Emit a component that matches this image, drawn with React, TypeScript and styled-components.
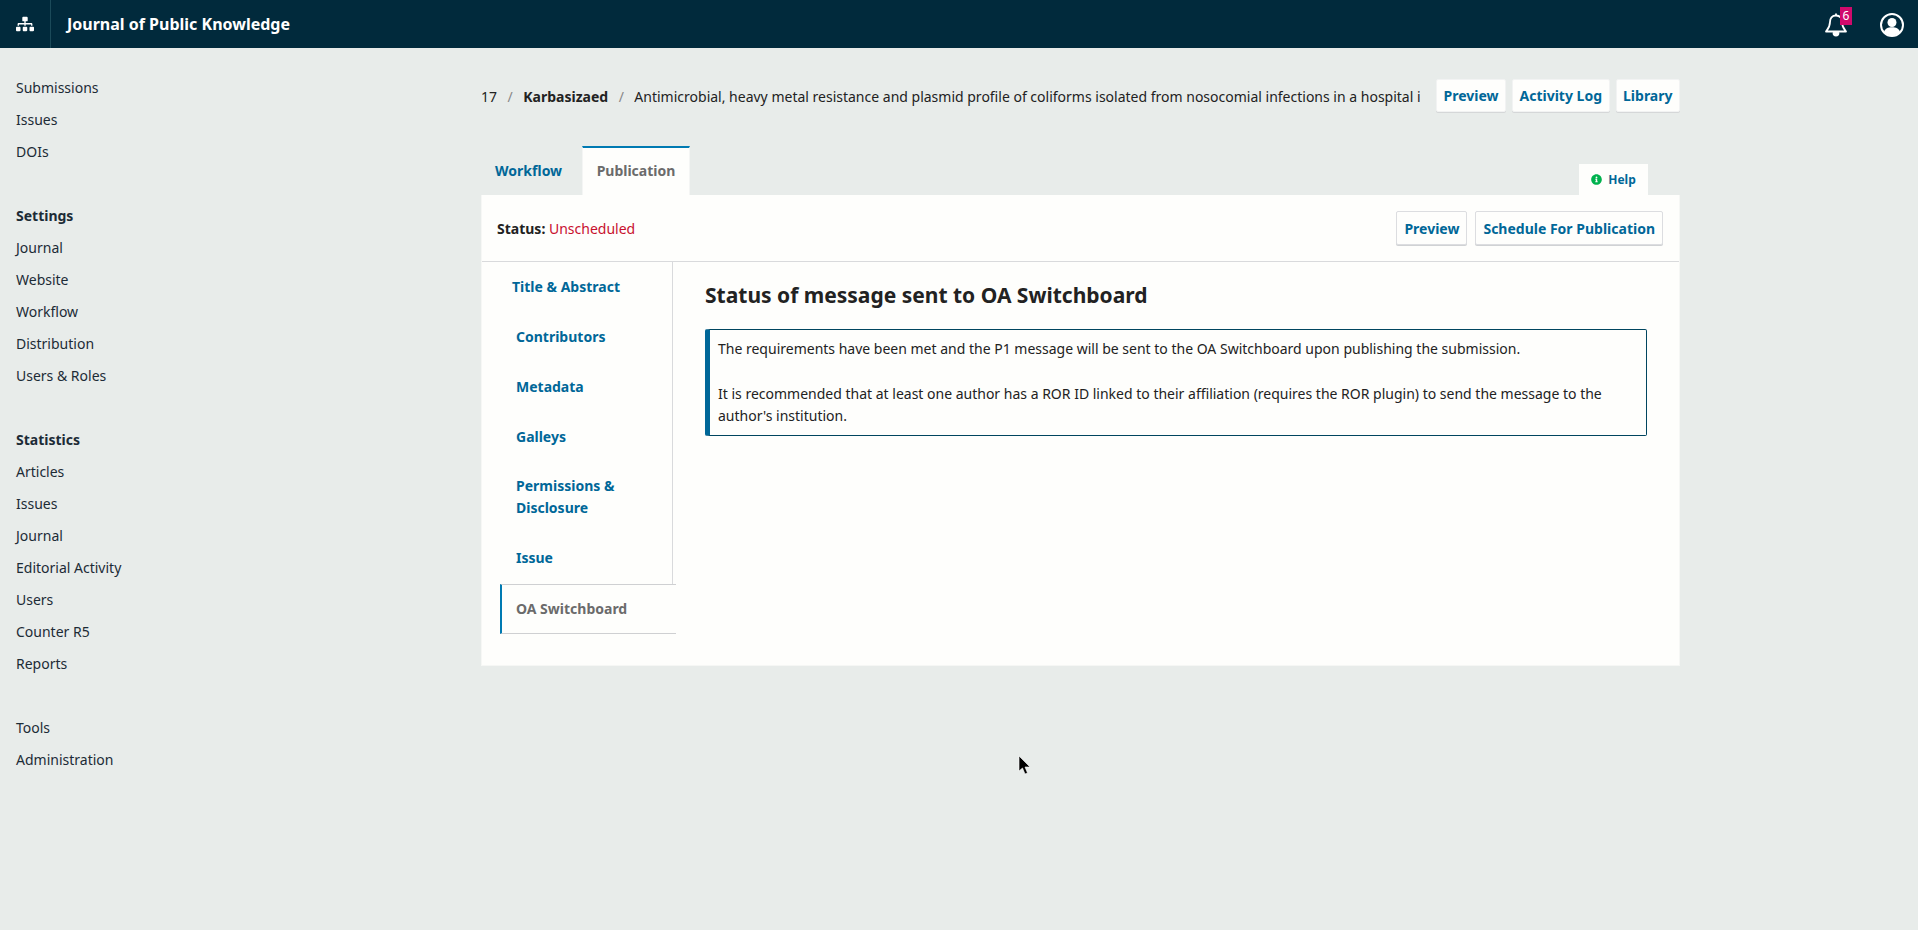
import React from "react";
import styled, { createGlobalStyle } from "styled-components";
import { FaSitemap, FaInfoCircle } from "react-icons/fa";

const Global = createGlobalStyle`
  html, body { margin: 0; padding: 0; height: 100%; }
  body { background: #e8ecea; font-family: "Noto Sans", sans-serif; font-size: 14px; color: #222; overflow: hidden; }
  * { box-sizing: border-box; }
`;

const Page = styled.div`
  height: 930px;
  position: relative;
  display: flex;
  flex-direction: column;
`;

const Header = styled.header`
  height: 48px;
  flex: none;
  background: #012a3c;
  color: #fff;
  display: flex;
  align-items: center;
`;

const HomeCell = styled.div`
  width: 51px;
  height: 48px;
  display: flex;
  align-items: center;
  justify-content: center;
  border-right: 1px solid #1b4a59;
  font-size: 18px;
  color: #fff;
  svg { display: block; }
`;

const JournalName = styled.div`
  margin-left: 16px;
  font-size: 16px;
  font-weight: 700;
  flex: 1;
`;

const BellWrap = styled.div`
  position: relative;
  width: 24px;
  height: 30px;
  margin-right: 32px;
  display: flex;
  align-items: center;
  justify-content: center;
  margin-top: 2px;
`;

const Badge = styled.span`
  position: absolute;
  left: 16px;
  top: -3px;
  width: 12px;
  height: 18px;
  background: #d00a6c;
  color: #fff;
  font-size: 12px;
  line-height: 18px;
  text-align: center;
`;

const AvatarWrap = styled.div`
  width: 24px;
  height: 24px;
  margin-right: 14px;
  margin-top: 2px;
`;

const Body = styled.div`
  flex: 1;
  display: flex;
`;

const Side = styled.nav`
  width: 481px;
  flex: none;
  padding: 24px 0 0 16px;
`;

const SideItem = styled.div<{ $bold?: boolean }>`
  height: 32px;
  line-height: 32px;
  font-size: 14px;
  font-weight: ${(p) => (p.$bold ? 700 : 400)};
  color: #1c2b36;
`;

const SideGap = styled.div<{ $h: number }>`
  height: ${(p) => p.$h}px;
`;

const Main = styled.main`
  width: 1199px;
  flex: none;
`;

const TitleRow = styled.div`
  display: flex;
  align-items: center;
  height: 33px;
  margin-top: 31px;
`;

const Crumbs = styled.div`
  width: 939px;
  flex: none;
  white-space: nowrap;
  overflow: hidden;
  font-size: 14px;
  color: #222;
  display: flex;
  margin-top: 1px;
`;

const CrumbSep = styled.span`
  color: #888;
  margin: 0 10.5px;
`;

const CrumbTitle = styled.span`
  min-width: 0;
  flex: 1;
  overflow: hidden;
`;

const Strong = styled.b`
  font-weight: 700;
`;

const TopButtons = styled.div`
  display: flex;
  gap: 6px;
  margin-left: auto;
`;

const TopButton = styled.button`
  height: 33px;
  padding: 0 6.5px;
  background: #fefefc;
  border: 1px solid #f2f3f3;
  box-shadow: 0 1px 0 #d5d7d8;
  border-radius: 2px;
  font-family: inherit;
  font-size: 14px;
  font-weight: 700;
  color: #006798;
`;

const TabRow = styled.div`
  display: flex;
  align-items: flex-end;
  height: 50px;
  margin-top: 33px;
`;

const TabLink = styled.div`
  width: 101px;
  height: 48px;
  padding: 13px 0 0 14px;
  font-weight: 700;
  font-size: 14px;
  line-height: 22px;
  color: #006798;
`;

const TabActive = styled.div`
  width: 108px;
  height: 49px;
  background: #fefefc;
  border-top: 2px solid #007ab2;
  border-left: 1px solid #f4f5f4;
  border-right: 1px solid #f4f5f4;
  text-align: center;
  padding-top: 12px;
  font-weight: 700;
  font-size: 14px;
  line-height: 22px;
  color: #6b6b6b;
`;

const HelpTab = styled.div`
  margin-left: auto;
  margin-right: 32px;
  width: 69px;
  height: 31px;
  background: #fefefc;
  display: flex;
  align-items: center;
  justify-content: center;
  gap: 6px;
  font-size: 12px;
  font-weight: 700;
  color: #006798;
  svg { color: #00b24e; display: block; }
`;

const Panel = styled.section`
  background: #fefefc;
  height: 471px;
  border: 1px solid #f6f7f5;
  border-top: 0;
`;

const StatusRow = styled.div`
  height: 67px;
  display: flex;
  align-items: center;
  padding: 0 16px 0 15px;
  border-bottom: 1px solid #d9dadc;
  gap: 8px;
`;

const StatusText = styled.div`
  flex: 1;
  font-size: 14px;
  color: #222;
`;

const Unscheduled = styled.span`
  color: #c8102e;
`;

const PanelButton = styled.button`
  height: 34px;
  padding: 0 7px;
  background: #fefefc;
  border: 1px solid #dcdde0;
  box-shadow: 0 1px 0 #d0d2d4;
  border-radius: 2px;
  font-family: inherit;
  font-size: 14px;
  font-weight: 700;
  color: #006798;
`;

const Split = styled.div`
  display: flex;
  position: relative;
`;

const TabsCol = styled.div`
  width: 191px;
  height: 322px;
  border-right: 1px solid #d9dadc;
  padding: 1px 0 0 34px;
  flex: none;
  display: flex;
  flex-direction: column;
`;

const SideTab = styled.div<{ $h?: number; $shift?: number }>`
  height: ${(p) => p.$h ?? 50}px;
  padding: 13px 16px 0 0;
  margin-left: ${(p) => p.$shift ?? 0}px;
  font-weight: 700;
  font-size: 14px;
  line-height: 22px;
  color: #006798;
`;

const SideTabActive = styled.div`
  position: absolute;
  left: 18px;
  top: 322px;
  width: 176px;
  height: 50px;
  background: #fefefc;
  border-top: 1px solid #cfd0d2;
  border-bottom: 1px solid #cfd0d2;
  border-left: 2px solid #007ab2;
  padding: 13px 0 0 14px;
  font-weight: 700;
  font-size: 14px;
  line-height: 22px;
  color: #6b6b6b;
`;

const Content = styled.div`
  flex: 1;
  padding: 19px 32px 0 32px;
`;

const Heading = styled.h2`
  margin: 0 0 20px;
  font-size: 21px;
  line-height: 28px;
  font-weight: 700;
  color: #222;
`;

const Notice = styled.div`
  border: 1px solid #00455f;
  border-left: 5px solid #006798;
  border-radius: 2px;
  padding: 8px 8px 9px 8px;
  font-size: 14px;
  line-height: 22.4px;
  color: #222;
  height: 107px;
`;

const Cursor = styled.svg`
  position: absolute;
  left: 1018px;
  top: 755px;
`;

const BellIcon = () => (
  <svg width="24" height="26" viewBox="0 0 24 26" fill="none" stroke="#fff" strokeWidth="1.8" strokeLinejoin="round">
    <path d="M12 3.5c-4 0-6 3-6 6.5 0 5-2 7-4 9.5h20c-2-2.500-4-4.500-4-9.500 0-3.500-2-6.500-6-6.500z" />
    <path d="M12 1.500v2" />
    <path d="M9.500 21a2.500 2.500 0 0 0 5 0z" fill="#fff" />
  </svg>
);

const AvatarIcon = () => (
  <svg width="24" height="24" viewBox="0 0 24 24">
    <circle cx="12" cy="12" r="11" fill="none" stroke="#fff" strokeWidth="2" />
    <circle cx="12" cy="9.500" r="4.500" fill="#fff" />
    <path d="M4 19c1-3.500 4-4.800 8-4.800s7 1.300 8 4.800a11 11 0 0 1-16 0z" fill="#fff" />
  </svg>
);

export default function App() {
  return (
    <Page>
      <Global />
      <Header>
        <HomeCell>
          <FaSitemap />
        </HomeCell>
        <JournalName>Journal of Public Knowledge</JournalName>
        <BellWrap>
          <BellIcon />
          <Badge>6</Badge>
        </BellWrap>
        <AvatarWrap>
          <AvatarIcon />
        </AvatarWrap>
      </Header>
      <Body>
        <Side>
          <SideItem>Submissions</SideItem>
          <SideItem>Issues</SideItem>
          <SideItem>DOIs</SideItem>
          <SideGap $h={32} />
          <SideItem $bold>Settings</SideItem>
          <SideItem>Journal</SideItem>
          <SideItem>Website</SideItem>
          <SideItem>Workflow</SideItem>
          <SideItem>Distribution</SideItem>
          <SideItem>Users &amp; Roles</SideItem>
          <SideGap $h={32} />
          <SideItem $bold>Statistics</SideItem>
          <SideItem>Articles</SideItem>
          <SideItem>Issues</SideItem>
          <SideItem>Journal</SideItem>
          <SideItem>Editorial Activity</SideItem>
          <SideItem>Users</SideItem>
          <SideItem>Counter R5</SideItem>
          <SideItem>Reports</SideItem>
          <SideGap $h={32} />
          <SideItem>Tools</SideItem>
          <SideItem>Administration</SideItem>
        </Side>
        <Main>
          <TitleRow>
            <Crumbs>
              <span>17</span>
              <CrumbSep>/</CrumbSep>
              <Strong>Karbasizaed</Strong>
              <CrumbSep>/</CrumbSep>
              <CrumbTitle>Antimicrobial, heavy metal resistance and plasmid profile of coliforms isolated from nosocomial infections in a hospital in Ahvaz, Iran</CrumbTitle>
            </Crumbs>
            <TopButtons>
              <TopButton>Preview</TopButton>
              <TopButton>Activity Log</TopButton>
              <TopButton>Library</TopButton>
            </TopButtons>
          </TitleRow>
          <TabRow>
            <TabLink>Workflow</TabLink>
            <TabActive>Publication</TabActive>
            <HelpTab>
              <FaInfoCircle size={11} />
              Help
            </HelpTab>
          </TabRow>
          <Panel>
            <StatusRow>
              <StatusText>
                <Strong>Status:</Strong> <Unscheduled>Unscheduled</Unscheduled>
              </StatusText>
              <PanelButton>Preview</PanelButton>
              <PanelButton>Schedule For Publication</PanelButton>
            </StatusRow>
            <Split>
              <TabsCol>
                <SideTab $shift={-4}>Title &amp; Abstract</SideTab>
                <SideTab $h={51}>Contributors</SideTab>
                <SideTab>Metadata</SideTab>
                <SideTab>Galleys</SideTab>
                <SideTab $h={73}>Permissions &amp; Disclosure</SideTab>
                <SideTab>Issue</SideTab>
              </TabsCol>
              <SideTabActive>OA Switchboard</SideTabActive>
              <Content>
                <Heading>Status of message sent to OA Switchboard</Heading>
                <Notice>
                  The requirements have been met and the P1 message will be sent to the OA Switchboard upon publishing the submission.
                  <br />
                  <br />
                  It is recommended that at least one author has a ROR ID linked to their affiliation (requires the ROR plugin) to send the message to the author's institution.
                </Notice>
              </Content>
            </Split>
          </Panel>
        </Main>
      </Body>
      <Cursor width="14" height="22" viewBox="0 0 14 22">
        <path d="M1 1v15l3.500-3 2.500 6 2.500-1-2.500-6h5z" fill="#000" stroke="#fff" strokeWidth="0.6" />
      </Cursor>
    </Page>
  );
}
